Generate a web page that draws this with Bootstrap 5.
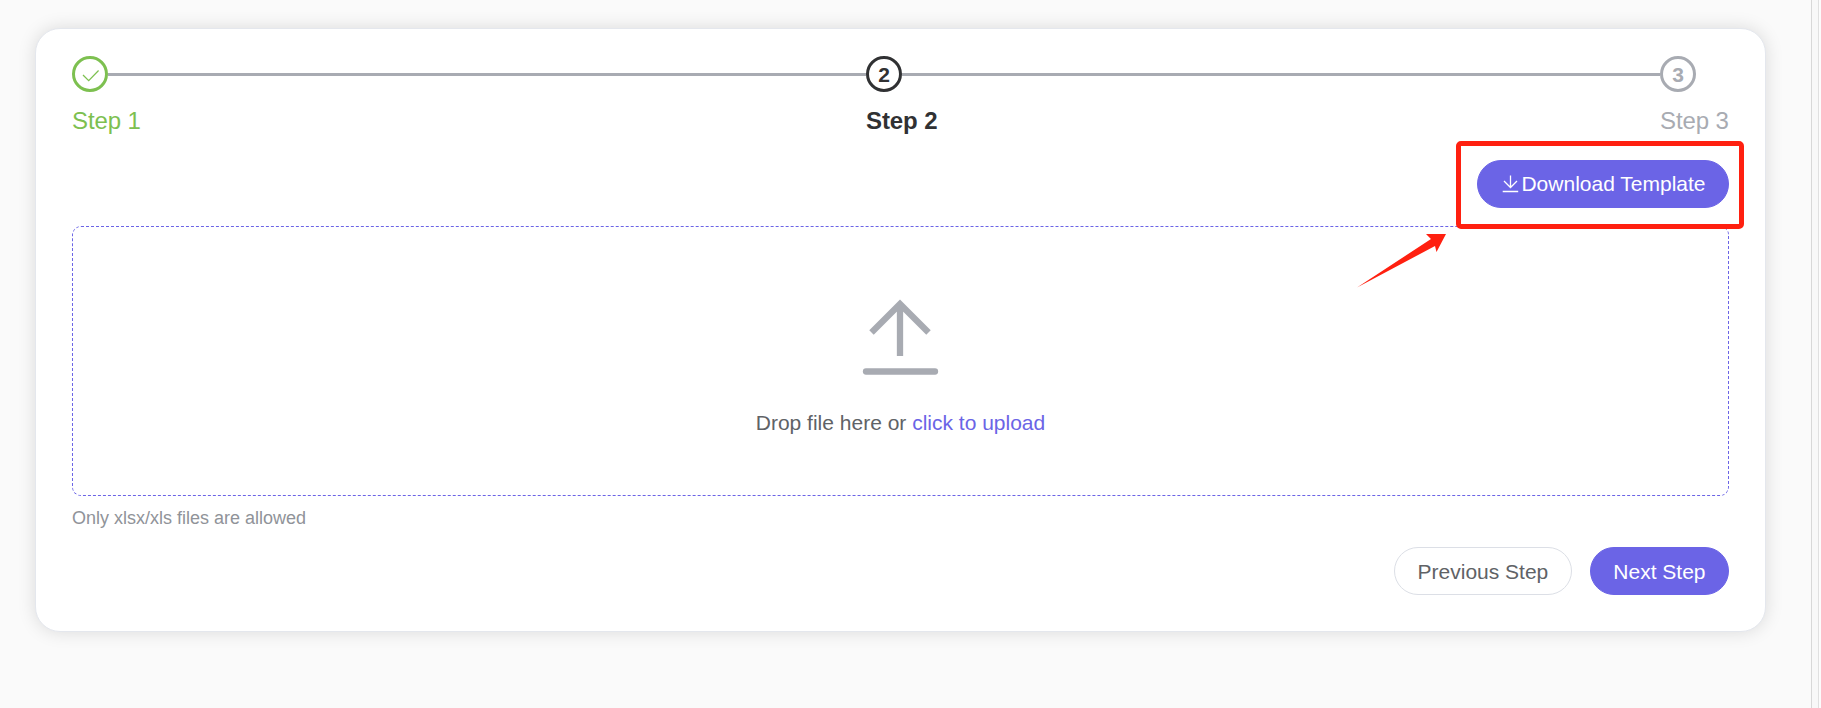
<!DOCTYPE html>
<html lang="en">
<head>
<meta charset="utf-8">
<meta name="viewport" content="width=device-width, initial-scale=1">
<title>Import</title>
<link href="https://cdn.jsdelivr.net/npm/bootstrap@5.3.0/dist/css/bootstrap.min.css" rel="stylesheet">
<style>
body{font-family:"Liberation Sans",Arial,sans-serif;font-size:21px;line-height:1.5;background:#fafafa;color:#606266;height:708px;overflow:hidden}
.page{height:708px}
.panel{width:1731px;height:604px;margin:28px 0 0 35px;padding:27px 36px 36px;border:1px solid #e4e7ed;border-radius:25px;box-shadow:0 0 18px rgba(0,0,0,.13)}
.gutter{width:10px;background:#f8f8f8;border-left:1px solid #d8d8d8}
.gutter-edge{width:3px;border-left:1px solid #e0e0e0;background:#fcfcfc}
.step{width:794px}
.step-last{width:69px}
.step-dot{width:36px;height:36px;border:3px solid currentColor;font-weight:700;line-height:1}
.step-line{height:3px;background:#a8abb2;margin-top:1px}
.step-name{font-size:24px;line-height:57px;white-space:nowrap;letter-spacing:-.1px}
.done{color:#7dc050}.now{color:#303133}.wait{color:#a8abb2}
.tools{margin-top:11px}
.pill{height:48px;padding:0 22.5px;border-radius:24px;font-size:21px;line-height:1}
.pill-label{padding-bottom:2px}
.pill-main{--bs-btn-bg:#6b64e6;--bs-btn-color:#fff;--bs-btn-border-color:#6b64e6;--bs-btn-hover-bg:#5750d8;--bs-btn-hover-color:#fff}
.pill-plain{--bs-btn-bg:#fff;--bs-btn-color:#606266;--bs-btn-border-color:#dcdfe6}
.drop{height:270px;margin-top:18px;border:1px dashed #6b64e6;border-radius:9px;padding-top:60px}
.drop-text{margin-top:19px}
.link-main{color:#6b64e6}
.tip{font-size:18px;line-height:22px;margin-top:11px;color:#909399}
.actions{gap:18px;margin-top:18px}
.callout{left:-21px;top:-19px;width:288px;height:88px;border:5px solid #ff2010;border-radius:5px;pointer-events:none}
.pointer{left:-120px;top:73px;pointer-events:none}
</style>
</head>
<body>
<div class="page d-flex">
<main class="panel bg-white flex-shrink-0">
  <div class="d-flex">
    <div class="step">
      <div class="d-flex align-items-center">
        <span class="step-dot rounded-circle d-flex align-items-center justify-content-center flex-shrink-0 done"><svg width="18" height="18" viewBox="0 0 18 18" fill="none" stroke="currentColor" stroke-width="1.3"><path d="M2 10 7.700 15.600 17.600 5.500"/></svg></span>
        <span class="step-line flex-grow-1"></span>
      </div>
      <div class="step-name done">Step 1</div>
    </div>
    <div class="step">
      <div class="d-flex align-items-center">
        <span class="step-dot rounded-circle d-flex align-items-center justify-content-center flex-shrink-0 now">2</span>
        <span class="step-line flex-grow-1"></span>
      </div>
      <div class="step-name fw-bold now">Step 2</div>
    </div>
    <div class="step-last">
      <span class="step-dot rounded-circle d-flex align-items-center justify-content-center wait">3</span>
      <div class="step-name wait">Step 3</div>
    </div>
  </div>
  <div class="d-flex justify-content-end tools">
    <div class="position-relative">
      <button class="btn pill pill-main d-flex align-items-center"><svg width="21" height="21" viewBox="0 0 21 21" fill="none" stroke="currentColor" stroke-width="1.3"><path d="M10.500 1.500v12M4 7l6.500 6.500L17 7M2.700 17.500h15.500"/></svg><span class="pill-label">Download Template</span></button>
      <div class="callout position-absolute"></div>
      <svg class="pointer position-absolute" width="92" height="58" viewBox="0 0 92 58"><path d="M0 54.500 74 6 69 1 89 1 79.500 19 78 13Z" fill="#ff2010"/></svg>
    </div>
  </div>
  <div class="drop d-flex flex-column align-items-center">
    <svg class="flex-shrink-0" width="101" height="101" viewBox="0 0 101 101" fill="none" stroke="#a8abb2" stroke-width="6.300"><path d="M50 17v52M21.500 45.500 50 17l28.500 28.500"/><path d="M16 84.500h69" stroke-linecap="round"/></svg>
    <div class="drop-text">Drop file here or <span class="link-main">click to upload</span></div>
  </div>
  <div class="tip">Only xlsx/xls files are allowed</div>
  <div class="actions d-flex justify-content-end">
    <button class="btn pill pill-plain">Previous Step</button>
    <button class="btn pill pill-main">Next Step</button>
  </div>
</main>
<div class="gutter ms-auto d-flex justify-content-end"><span class="gutter-edge"></span></div>
</div>
<script src="https://cdn.jsdelivr.net/npm/bootstrap@5.3.0/dist/js/bootstrap.bundle.min.js"></script>
</body>
</html>
